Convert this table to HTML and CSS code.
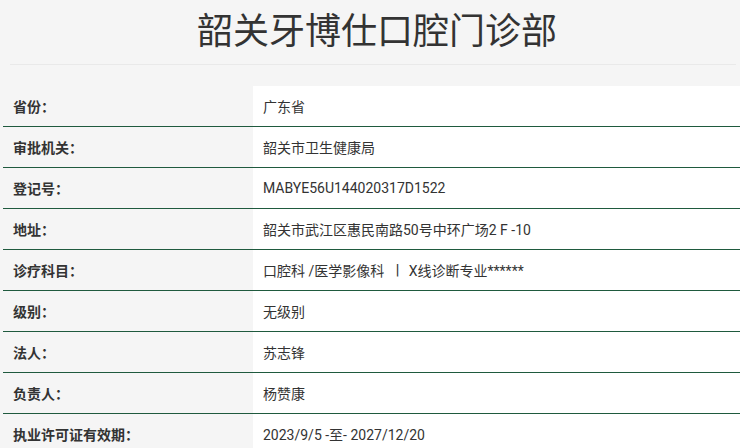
FILE: index.html
```html
<!DOCTYPE html>
<html lang="zh">
<head>
<meta charset="utf-8">
<link rel="stylesheet" href="styles.css">
</head>
<body>
<div class="page">
  <h1 class="title">韶关牙博仕口腔门诊部</h1>
  <div class="rule"></div>
  <div class="info">
    <div class="row"><div class="label">省份：</div><div class="value">广东省</div></div>
    <div class="row"><div class="label">审批机关：</div><div class="value">韶关市卫生健康局</div></div>
    <div class="row"><div class="label">登记号：</div><div class="value">MABYE56U144020317D1522</div></div>
    <div class="row"><div class="label">地址：</div><div class="value">韶关市武江区惠民南路50号中环广场2 F -10</div></div>
    <div class="row"><div class="label">诊疗科目：</div><div class="value">口腔科 /医学影像科 <span class="sep">|</span> X线诊断专业******</div></div>
    <div class="row"><div class="label">级别：</div><div class="value">无级别</div></div>
    <div class="row"><div class="label">法人：</div><div class="value">苏志锋</div></div>
    <div class="row"><div class="label">负责人：</div><div class="value">杨赞康</div></div>
    <div class="row"><div class="label">执业许可证有效期：</div><div class="value">2023/9/5 -至- 2027/12/20</div></div>
  </div>
</div>
</body>
</html>
```
FILE: styles.css
```css
html, body {
  margin: 0;
  padding: 0;
  background: #f5f5f5;
}
body {
  font-family: Roboto, "Noto Sans CJK SC", sans-serif;
  color: #333;
  overflow: hidden;
}
.page {
  width: 740px;
}
.title {
  margin: 10px 0 0 0;
  padding-left: 14px;
  font-size: 36px;
  line-height: 36px;
  font-weight: normal;
  text-align: center;
  color: #333;
  font-family: "Noto Sans CJK SC", sans-serif;
}
.rule {
  height: 1px;
  background: #e9e9e9;
  margin: 18px 4px 0 10px;
}
.info {
  margin: 21px 0 0 3px;
  width: 760px;
}
.row {
  display: flex;
  height: 40px;
  border-bottom: 1px solid #1f5a3e;
}
.label {
  width: 250px;
  flex: none;
  box-sizing: border-box;
  padding-left: 10px;
  display: flex;
  align-items: center;
  font-size: 14px;
  font-weight: bold;
  color: #333;
}
.value {
  flex: 1;
  background: #fff;
  box-sizing: border-box;
  padding-left: 10px;
  display: flex;
  align-items: center;
  font-size: 14px;
  color: #333;
  white-space: pre;
}
.sep {
  margin: 0 6px 0 8px;
  font-weight: bold;
}
```
